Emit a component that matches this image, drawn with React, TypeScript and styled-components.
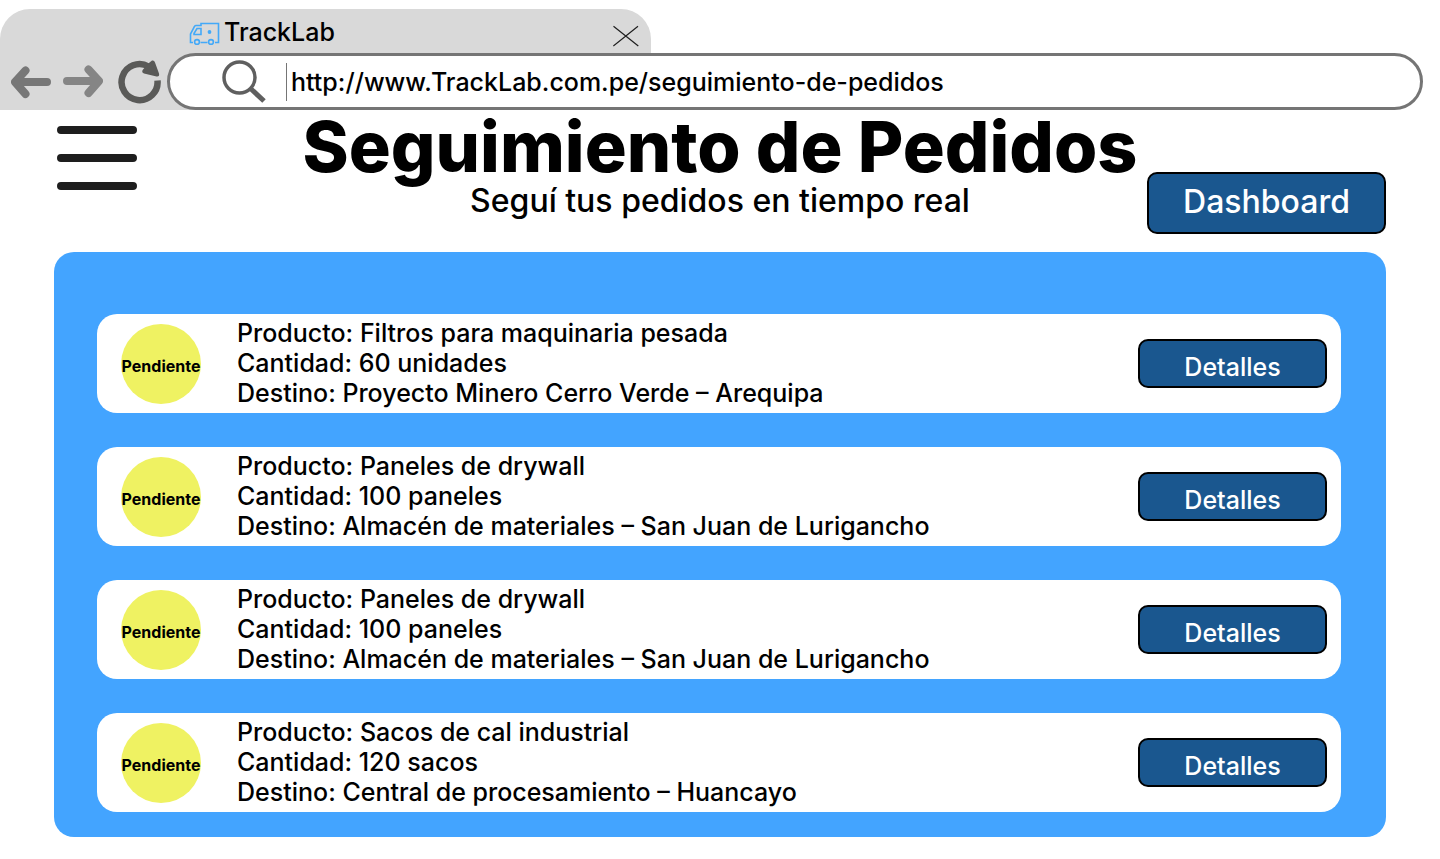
import React from "react";
import styled, { createGlobalStyle } from "styled-components";

const GlobalStyle = createGlobalStyle`
  *, *::before, *::after { box-sizing: border-box; }
  body {
    margin: 0;
    background: #ffffff;
    color: #000000;
    font-family: Inter, "Liberation Sans", sans-serif;
    font-weight: 500;
  }
  button, input { font: inherit; color: inherit; }
`;

const BrowserFrame = styled.div`
  padding-top: 9px;
`;

const Tab = styled.div`
  display: flex;
  align-items: center;
  width: 651px;
  max-width: 100%;
  height: 44px;
  padding: 3px 12px 0 189px;
  border-radius: 30px 30px 0 0;
  background: #d9d9d9;
  font-size: 25px;
  line-height: 30px;
`;

const TabTitle = styled.span`
  flex: 1;
  padding: 0 0 1px 4px;
`;

const Toolbar = styled.div`
  display: flex;
  align-items: center;
  padding-right: 17px;
  background: linear-gradient(to right, #d9d9d9 651px, #ffffff 651px);
`;

const IconButton = styled.button`
  display: flex;
  flex: none;
  padding: 0;
  border: 0;
  background: none;
  cursor: pointer;
`;

const NavButtons = styled.div`
  display: flex;
  flex: none;
  align-items: center;
  gap: 12px;
  width: 167px;
  padding-left: 11px;
`;

const AddressBar = styled.label`
  display: flex;
  flex: 1;
  align-items: center;
  height: 57px;
  padding: 0 30px 0 52px;
  border: 3px solid #757575;
  border-radius: 29px;
  background: #ffffff;
`;

const AddressInput = styled.input`
  flex: 1;
  min-width: 0;
  height: 38px;
  margin-left: 20px;
  padding: 0 0 0 4px;
  border: 0;
  border-left: 1px solid #757575;
  outline: 0;
  background: none;
  font-size: 25px;
`;

const Header = styled.header`
  display: grid;
  grid-template-columns: 1fr auto 1fr;
  align-items: start;
  min-height: 142px;
  padding: 0 54px;
`;

const MenuButton = styled(IconButton)`
  margin: 16px 0 0 3px;
  justify-self: start;
`;

const Heading = styled.div`
  text-align: center;
`;

const Title = styled.h1`
  margin: 0;
  font-size: 70px;
  line-height: 74px;
  font-weight: 800;
`;

const Subtitle = styled.p`
  margin: 0;
  font-size: 32px;
  line-height: 34px;
`;

const ActionButton = styled.button<{ $large?: boolean }>`
  flex: none;
  width: ${({ $large }) => ($large ? 239 : 189)}px;
  height: ${({ $large }) => ($large ? 62 : 49)}px;
  padding: ${({ $large }) => ($large ? "0 0 2px" : "7px 0 0")};
  border: 2px solid #000000;
  border-radius: 10px;
  background: #1a578f;
  color: #ffffff;
  font-size: ${({ $large }) => ($large ? 32 : 25)}px;
  line-height: 30px;
  cursor: pointer;
`;

const DashboardSlot = styled.div`
  display: flex;
  justify-content: flex-end;
  padding-top: 62px;
`;

const Orders = styled.ul`
  display: flex;
  flex-direction: column;
  gap: 34px;
  margin: 0 54px 22px;
  padding: 62px 45px 25px 43px;
  border-radius: 20px;
  background: #43a4ff;
  list-style: none;
`;

const OrderRow = styled.li`
  display: flex;
  align-items: center;
  min-height: 99px;
  padding: 0 14px 0 24px;
  border-radius: 20px;
  background: #ffffff;
`;

const Status = styled.span`
  display: flex;
  flex: none;
  align-items: center;
  justify-content: center;
  width: 80px;
  height: 80px;
  padding-top: 4px;
  border-radius: 50%;
  background: #eff262;
  font-size: 16px;
  font-weight: 700;
`;

const OrderText = styled.div`
  flex: 1;
  padding: 0 20px 2px 36px;
  font-size: 25px;
  line-height: 30px;
`;

const TruckIcon = () => (
  <svg width="31" height="24" viewBox="0 0 31 24" fill="none" stroke="#43a9f8" strokeWidth="1.6" aria-hidden="true">
    <path d="M4 21.5H1.5V13L5.5 5.5Q6 4.500 7 4.500H12V2.500H29.500V21.500H26M18.500 21.500H11.500M5 12.500 8 7.500H12V13.500H5Z" />
    <circle cx="8" cy="21" r="2.400" />
    <circle cx="22" cy="21" r="2.400" />
    <circle cx="20.500" cy="11" r="1.900" fill="#43a9f8" stroke="none" />
  </svg>
);

const CloseIcon = () => (
  <svg width="26" height="28" viewBox="0 0 26 28" stroke="#1e1e1e" strokeWidth="1.2" aria-hidden="true">
    <path d="M.5 7.300 25.300 27M25 7.300.300 27" />
  </svg>
);

const ArrowIcon = ({ forward = false }: { forward?: boolean }) => (
  <svg width="40" height="34" viewBox="0 0 40 34" fill="none" stroke={forward ? "#858585" : "#777777"} strokeWidth="8" strokeLinecap="round" strokeLinejoin="round" aria-hidden="true">
    <path d={forward ? "M4 16H35M25.500 4.500 36 16 25.500 28" : "M36 17H5M14.500 5.500 4 17 14.500 29"} />
  </svg>
);

const ReloadIcon = () => (
  <svg width="48" height="44" viewBox="0 0 48 44" fill="none" aria-hidden="true">
    <path d="M42.500 20.500A18 18 0 1 1 33.500 6.500" stroke="#5a5a58" strokeWidth="6.500" />
    <path d="M37 .6Q39.200 0 40 2.500L44 13.500Q44.800 17 41.500 16.500L29 13.500Q26 12.300 28 9.500L34.500 2.500Z" fill="#5a5a58" />
  </svg>
);

const SearchIcon = () => (
  <svg width="44" height="44" viewBox="0 0 44 44" fill="none" stroke="#5f5f5f" aria-hidden="true">
    <circle cx="17.500" cy="17.500" r="15.500" strokeWidth="3.500" />
    <path d="M28 28 42 41" strokeWidth="5" />
  </svg>
);

const MenuIcon = () => (
  <svg width="80" height="64" viewBox="0 0 80 64" stroke="#1e1e1e" strokeWidth="8" strokeLinecap="round" aria-hidden="true">
    <path d="M4 4H76M4 32H76M4 60H76" />
  </svg>
);

const orders = [
  { id: 1, product: "Filtros para maquinaria pesada", quantity: "60 unidades", destination: "Proyecto Minero Cerro Verde – Arequipa" },
  { id: 2, product: "Paneles de drywall", quantity: "100 paneles", destination: "Almacén de materiales – San Juan de Lurigancho" },
  { id: 3, product: "Paneles de drywall", quantity: "100 paneles", destination: "Almacén de materiales – San Juan de Lurigancho" },
  { id: 4, product: "Sacos de cal industrial", quantity: "120 sacos", destination: "Central de procesamiento – Huancayo" },
];

export default function App() {
  return (
    <>
      <GlobalStyle />
      <BrowserFrame>
        <Tab>
          <TruckIcon />
          <TabTitle>TrackLab</TabTitle>
          <IconButton aria-label="Cerrar"><CloseIcon /></IconButton>
        </Tab>
        <Toolbar>
          <NavButtons>
            <IconButton aria-label="Atrás"><ArrowIcon /></IconButton>
            <IconButton aria-label="Adelante"><ArrowIcon forward /></IconButton>
            <IconButton aria-label="Recargar"><ReloadIcon /></IconButton>
          </NavButtons>
          <AddressBar>
            <SearchIcon />
            <AddressInput type="text" aria-label="Dirección" defaultValue="http://www.TrackLab.com.pe/seguimiento-de-pedidos" />
          </AddressBar>
        </Toolbar>
      </BrowserFrame>
      <main>
        <Header>
          <MenuButton aria-label="Menú"><MenuIcon /></MenuButton>
          <Heading>
            <Title>Seguimiento de Pedidos</Title>
            <Subtitle>Seguí tus pedidos en tiempo real</Subtitle>
          </Heading>
          <DashboardSlot>
            <ActionButton $large>Dashboard</ActionButton>
          </DashboardSlot>
        </Header>
        <Orders>
          {orders.map((order) => (
            <OrderRow key={order.id}>
              <Status>Pendiente</Status>
              <OrderText>
                <div>Producto: {order.product}</div>
                <div>Cantidad: {order.quantity}</div>
                <div>Destino: {order.destination}</div>
              </OrderText>
              <ActionButton>Detalles</ActionButton>
            </OrderRow>
          ))}
        </Orders>
      </main>
    </>
  );
}
